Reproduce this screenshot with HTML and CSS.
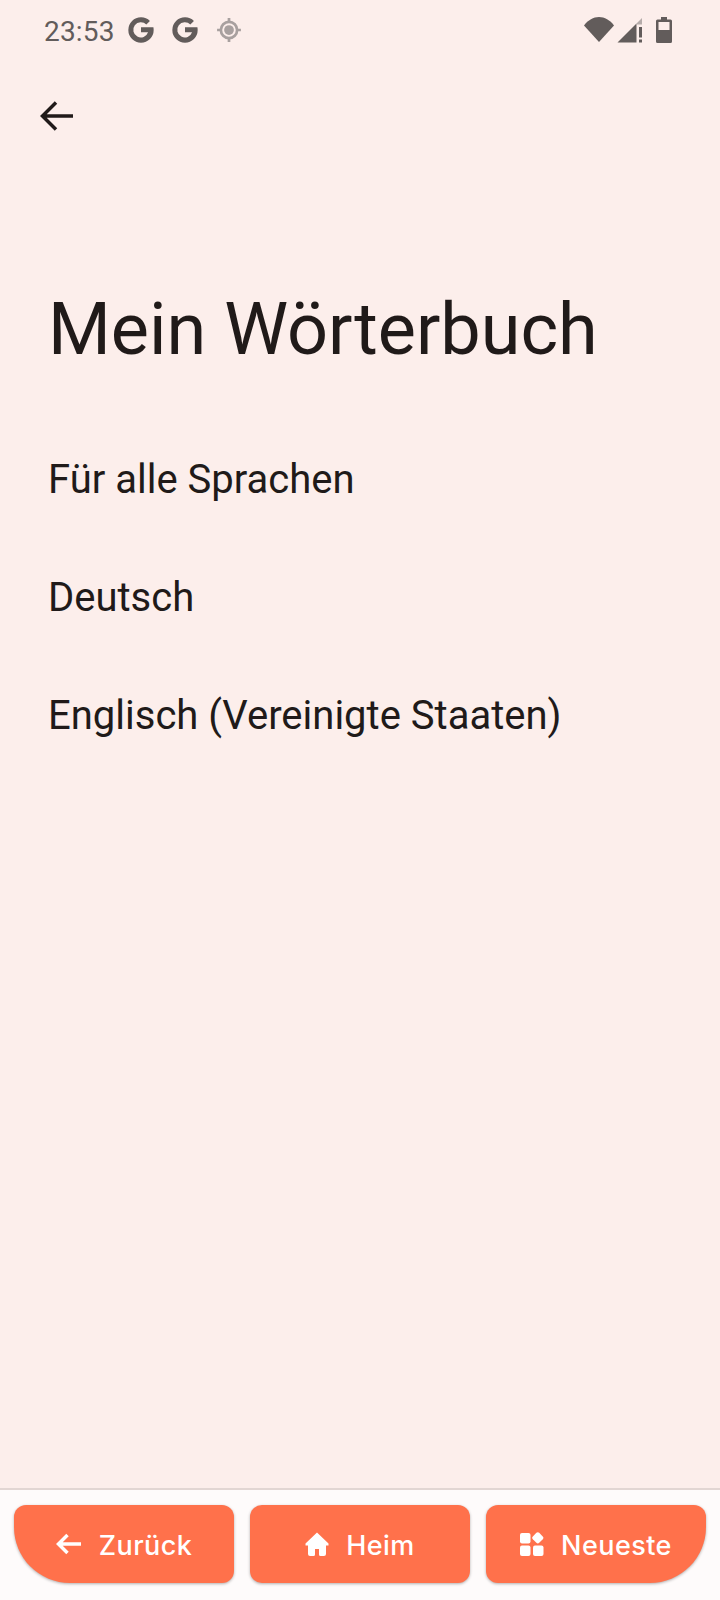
FILE: index.html
```html
<!DOCTYPE html>
<html lang="de">
<head>
    <meta charset="UTF-8">
    <title>Mein Wörterbuch</title>
    <link rel="stylesheet" href="styles.css">
</head>
<body>
<div class="screen">
    <div class="status">
        <div class="status-left">
            <span class="time">23:53</span>
            <svg class="g-icon" viewBox="0 0 24 24"><path d="M12 2.5a9.5 9.5 0 1 0 9.5 9.5c0-.7-.1-1.3-.2-2H12v3.700h5.300A5.700 5.700 0 1 1 16 7.900l2.700-2.700A9.400 9.400 0 0 0 12 2.500z"/></svg>
            <svg class="g-icon" viewBox="0 0 24 24"><path d="M12 2.5a9.5 9.5 0 1 0 9.5 9.5c0-.7-.1-1.3-.2-2H12v3.700h5.300A5.700 5.700 0 1 1 16 7.900l2.700-2.700A9.400 9.400 0 0 0 12 2.500z"/></svg>
            <svg class="loc-icon" viewBox="0 0 24 24"><circle cx="12" cy="12" r="4.500" class="loc-dot"/><circle cx="12" cy="12" r="7.500" class="loc-ring"/><path class="loc-ring" d="M12 1v3.500M12 19.500V23M1 12h3.500M19.500 12H23"/></svg>
        </div>
        <div class="status-right">
            <svg class="wifi-icon" viewBox="0 0 30 26"><path d="M15 25L0 8.500C4 3 9.500 0 15 0s11 3 15 8.500z"/></svg>
            <svg class="signal-icon" viewBox="0 0 26 26"><path d="M.5 25.500L19.500 6.500v19z"/><path class="signal-empty" d="M19.500 6.500L25 1v6.500h-5.500z"/><path d="M22 10h3v10.500h-3zM22 22.500h3v3h-3z"/></svg>
            <svg class="battery-icon" viewBox="0 0 16 26"><path d="M5 0h6v2.500h3.500q1.500 0 1.500 1.500v20.500q0 1.500-1.500 1.500h-13q-1.500 0-1.500-1.500V4q0-1.500 1.500-1.500H5zM2.500 5v8h11V5z" fill-rule="evenodd"/></svg>
        </div>
    </div>

    <div class="toolbar">
        <svg class="back-icon" viewBox="0 0 34 32"><path d="M33 16H3M16 2.500L2.500 16 16 29.500"/></svg>
    </div>

    <h1 class="title">Mein Wörterbuch</h1>

    <div class="list">
        <div class="list-item">Für alle Sprachen</div>
        <div class="list-item">Deutsch</div>
        <div class="list-item">Englisch (Vereinigte Staaten)</div>
    </div>

    <div class="bottom-bar">
        <button class="nav-btn nav-first">
            <svg class="btn-arrow" viewBox="0 0 26 22"><path d="M25 11H3M11.500 2L2.500 11l9 9"/></svg>
            <span class="btn-label">Zurück</span>
        </button>
        <button class="nav-btn">
            <svg class="btn-icon" viewBox="0 0 24 24"><path d="M12 .5L.500 11.500V13.500H3V22q0 2 2 2h3.500q1.500 0 1.500-1.500V17h4v5.500q0 1.500 1.500 1.500H19q2 0 2-2v-8.500h2.500v-2z"/></svg>
            <span class="btn-label">Heim</span>
        </button>
        <button class="nav-btn nav-last">
            <svg class="btn-icon" viewBox="0 0 24 24"><rect x="0" y="1" width="10.500" height="10.500" rx="2"/><rect x="0" y="13.500" width="10.500" height="10.500" rx="2"/><rect x="13" y="13.500" width="10.500" height="10.500" rx="2"/><rect x="13.300" y="1.300" width="9" height="9" rx="2" transform="rotate(45 17.800 5.800)"/></svg>
            <span class="btn-label">Neueste</span>
        </button>
    </div>
</div>
</body>
</html>
```

FILE: styles.css
```css
html, body {
    margin: 0;
    padding: 0;
}
body {
    font-family: Roboto, sans-serif;
    background-color: #fceeeb;
    color: #201a19;
}
.screen {
    display: flex;
    flex-direction: column;
    width: 720px;
    height: 1600px;
    overflow: hidden;
}
.status {
    display: flex;
    justify-content: space-between;
    align-items: center;
    height: 62px;
    padding: 0 48px 0 44px;
    flex-shrink: 0;
}
.status-left {
    display: flex;
    align-items: center;
}
.status-right {
    display: flex;
    align-items: center;
    margin-bottom: 2px;
}
.time {
    font-size: 28px;
    letter-spacing: 0.2px;
    color: #625c5b;
    width: 81px;
}
.g-icon {
    width: 32px;
    height: 32px;
    fill: #625c5b;
    margin-right: 12px;
    margin-bottom: 2px;
}
.loc-icon {
    width: 26px;
    height: 26px;
    margin-left: 3px;
    margin-bottom: 2px;
}
.loc-dot {
    fill: #a8a09f;
}
.loc-ring {
    fill: none;
    stroke: #a8a09f;
    stroke-width: 2.500;
}
.wifi-icon {
    width: 30px;
    height: 26px;
    fill: #625c5b;
}
.signal-icon {
    width: 26px;
    height: 26px;
    fill: #625c5b;
    margin-left: 3px;
}
.signal-empty {
    fill: #b5acaa;
}
.battery-icon {
    width: 16px;
    height: 26px;
    fill: #625c5b;
    margin-left: 13px;
}
.toolbar {
    height: 110px;
    padding-left: 40px;
    flex-shrink: 0;
}
.back-icon {
    display: block;
    width: 34px;
    height: 32px;
    margin-top: 38px;
    fill: none;
    stroke: #201a19;
    stroke-width: 3.500;
}
.title {
    margin: 0;
    padding-left: 48px;
    font-size: 72px;
    font-weight: 400;
    line-height: 84px;
    margin-top: 116px;
    flex-shrink: 0;
}
.list {
    flex: 1;
    margin-top: 49px;
    padding-left: 48px;
}
.list-item {
    height: 118px;
    line-height: 118px;
    font-size: 40px;
}
.bottom-bar {
    display: flex;
    gap: 16px;
    height: 112px;
    padding: 15px 14px 0;
    box-sizing: border-box;
    background-color: #fefbfb;
    border-top: 2px solid #e2d6d3;
    flex-shrink: 0;
}
.nav-btn {
    display: flex;
    align-items: center;
    justify-content: center;
    gap: 17px;
    width: 220px;
    height: 78px;
    padding: 0;
    border: 0;
    border-radius: 12px;
    background-color: #ff714b;
    color: #fff;
    font-family: Inter, sans-serif;
    font-size: 27px;
    font-weight: 500;
    letter-spacing: 0.45px;
    box-shadow: 0 1px 3px rgba(0, 0, 0, 0.3);
}
.nav-first {
    border-bottom-left-radius: 56px;
}
.nav-last {
    border-bottom-right-radius: 56px;
}
.btn-label {
    margin-top: 2px;
}
.btn-arrow {
    width: 26px;
    height: 22px;
    fill: none;
    stroke: #fff;
    stroke-width: 3.500;
}
.btn-icon {
    width: 24px;
    height: 24px;
    fill: #fff;
}
```
